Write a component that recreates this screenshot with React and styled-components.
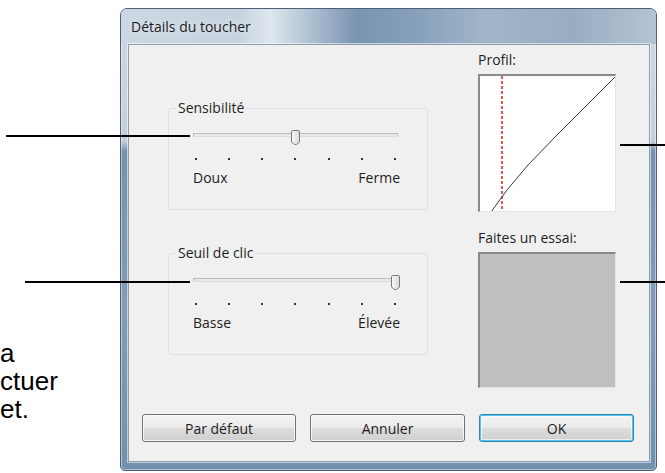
import styled, { createGlobalStyle } from 'styled-components';

const GlobalStyle = createGlobalStyle`
  html, body {
    margin: 0;
    padding: 0;
    background: #ffffff;
  }
`;

const Page = styled.div`
  position: relative;
  width: 665px;
  height: 473px;
  overflow: hidden;
  display: flex;
  align-items: flex-start;
  background: #ffffff;
`;

const BodyText = styled.div`
  width: 120px;
  flex-shrink: 0;
  padding-top: 339px;
  font-family: 'Liberation Sans', Arial, sans-serif;
  font-size: 26px;
  line-height: 28px;
  color: #000;
  white-space: nowrap;
`;

const Callout = styled.div`
  position: absolute;
  height: 2px;
  background: #000;
  top: ${(p) => p.top}px;
  left: ${(p) => p.left}px;
  width: ${(p) => p.width}px;
  z-index: 5;
`;

const Window = styled.div`
  margin-top: 8px;
  width: 537px;
  height: 463px;
  box-sizing: border-box;
  display: flex;
  flex-direction: column;
  padding: 0 6px 8px 7px;
  border: 1px solid #4d6075;
  border-radius: 7px 7px 5px 5px;
  background: linear-gradient(
    to bottom,
    #cdd8e3 0px,
    #c3cfdb 132px,
    #7592af 142px,
    #809cb8 300px,
    #7191af 100%
  );
  box-shadow: inset 0 0 0 1px rgba(255, 255, 255, 0.45);
  font-family: 'Open Sans', 'Noto Sans', sans-serif;
  font-size: 14px;
  color: #1e1e1e;
`;

const TitleBar = styled.div`
  height: 35px;
  margin: 0 -6px 0 -7px;
  padding-left: 10px;
  display: flex;
  align-items: center;
  padding-bottom: 1px;
  box-sizing: border-box;
  border-radius: 6px 6px 0 0;
  background: linear-gradient(
    90deg,
    #cbd7e2 0%,
    #c6d3df 22%,
    #dfe7ee 28%,
    #abbdd0 36%,
    #7a95b2 44%,
    #86a0ba 55%,
    #a2b5c8 68%,
    #98adc2 84%,
    #b3c3d2 100%
  );
  color: #1a1a1a;
  text-shadow: 0 0 6px rgba(255, 255, 255, 0.9);
`;

const Client = styled.div`
  flex: 1;
  display: flex;
  flex-direction: column;
  background: #f0f0f0;
  border: 1px solid #8d9eb1;
  box-shadow: 0 0 0 1px rgba(255, 255, 255, 0.55);
`;

const Main = styled.div`
  display: flex;
  padding-left: 39px;
  gap: 50px;
`;

const LeftColumn = styled.div`
  width: 260px;
  padding-top: 55px;
  display: flex;
  flex-direction: column;
  gap: 35px;
`;

const Group = styled.fieldset`
  margin: 0;
  padding: 0 29px 23px 24px;
  border: 1px solid #d9e1e7;
  border-radius: 3px;
  min-width: 0;
`;

const Legend = styled.legend`
  margin-left: -17px;
  padding: 0 2px;
  line-height: 16px;
  color: #1e1e1e;
`;

const SliderWrap = styled.div`
  position: relative;
  height: 14px;
  margin-top: 14px;
`;

const Track = styled.div`
  position: absolute;
  left: 0;
  right: 0;
  top: 3px;
  height: 2px;
  background: #e7eaea;
  border: 1px solid #b9bdbf;
  border-bottom-color: #dadddf;
  border-radius: 1px;
`;

const Thumb = styled.svg`
  position: absolute;
  top: 0;
  margin-left: -4.5px;
`;

const Ticks = styled.div`
  display: flex;
  justify-content: space-between;
  padding: 0 2px;
  margin-top: 14px;
`;

const Tick = styled.span`
  width: 2px;
  height: 2px;
  background: #333;
`;

const Scale = styled.div`
  display: flex;
  justify-content: space-between;
  margin: 10px -2px 0 0;
  line-height: 16px;
`;

const RightColumn = styled.div`
  width: 138px;
  padding-top: 7px;
  display: flex;
  flex-direction: column;
`;

const Caption = styled.div`
  line-height: 16px;
  margin-bottom: 6px;
`;

const Well = styled.div`
  box-sizing: border-box;
  width: 138px;
  height: ${(p) => p.h}px;
  background: ${(p) => p.bg};
  border-top: 2px solid #8a8a8a;
  border-left: 2px solid #8a8a8a;
  border-right: 1px solid #e4e4e4;
  border-bottom: 1px solid #e4e4e4;
  margin-bottom: ${(p) => p.mb || 0}px;
`;

const ButtonRow = styled.div`
  margin-top: auto;
  padding: 0 0 19px 13px;
  display: flex;
  gap: 14px;
`;

const Button = styled.button`
  width: ${(p) => p.w}px;
  height: 28px;
  padding: 0;
  font-family: inherit;
  font-size: 14px;
  color: #1e1e1e;
  border-radius: 3px;
  border: 1px solid ${(p) => (p.primary ? '#3c7fb1' : '#707070')};
  background: linear-gradient(
    to bottom,
    #f2f2f2 0%,
    #ebebeb 50%,
    #dddddd 51%,
    #cfcfcf 100%
  );
  box-shadow: ${(p) =>
    p.primary
      ? 'inset 0 0 0 1px #48c8f4, inset 0 0 0 2px rgba(255,255,255,0.6)'
      : 'inset 0 0 0 1px rgba(255,255,255,0.8)'};
`;

function Slider({ id, label, value, low, high }) {
  const frac = value / 6;
  return (
    <Group>
      <Legend>{label}</Legend>
      <SliderWrap>
        <Track />
        <Thumb
          width="9"
          height="15"
          viewBox="0 0 9 15"
          style={{ left: `calc(3px + (100% - 6px) * ${frac})` }}
        >
          <defs>
            <linearGradient id={`thumb-${id}`} x1="0" y1="0" x2="1" y2="0">
              <stop offset="0" stopColor="#fbfbfb" />
              <stop offset="1" stopColor="#d9d9d9" />
            </linearGradient>
          </defs>
          <path
            d="M1.8 0.5 H7.2 Q8.5 0.5 8.5 1.8 V11 Q8.5 12 7.5 13 L5.3 14.5 H3.7 L1.5 13 Q0.5 12 0.5 11 V1.8 Q0.5 0.5 1.8 0.5 Z"
            fill={`url(#thumb-${id})`}
            stroke="#7a7a7a"
            strokeWidth="1"
          />
        </Thumb>
      </SliderWrap>
      <Ticks>
        {Array.from({ length: 7 }).map((_, i) => (
          <Tick key={i} />
        ))}
      </Ticks>
      <Scale>
        <span>{low}</span>
        <span>{high}</span>
      </Scale>
    </Group>
  );
}

export default function App() {
  return (
    <Page>
      <GlobalStyle />
      <BodyText>
        <div>a</div>
        <div>ctuer</div>
        <div>et.</div>
      </BodyText>

      <Window>
        <TitleBar>Détails du toucher</TitleBar>
        <Client>
          <Main>
            <LeftColumn>
              <Slider id="sens" label="Sensibilité" value={3} low="Doux" high="Ferme" />
              <Slider id="seuil" label="Seuil de clic" value={6} low="Basse" high="Élevée" />
            </LeftColumn>
            <RightColumn>
              <Caption>Profil:</Caption>
              <Well h={138} bg="#ffffff" mb={18}>
                <svg width="135" height="135" viewBox="0 0 135 135">
                  <line
                    x1="22"
                    y1="0"
                    x2="22"
                    y2="135"
                    stroke="#e02020"
                    strokeWidth="1.5"
                    strokeDasharray="3 2"
                  />
                  <path
                    d="M11 136 L27 114 L48 89 L77 59 L135 1"
                    fill="none"
                    stroke="#3a3a3a"
                    strokeWidth="1"
                  />
                </svg>
              </Well>
              <Caption>Faites un essai:</Caption>
              <Well h={136} bg="#c0c0c0" />
            </RightColumn>
          </Main>
          <ButtonRow>
            <Button w={154}>Par défaut</Button>
            <Button w={155}>Annuler</Button>
            <Button w={155} primary>
              OK
            </Button>
          </ButtonRow>
        </Client>
      </Window>

      <Callout top={135} left={6} width={184} />
      <Callout top={281} left={25} width={165} />
      <Callout top={144} left={620} width={45} />
      <Callout top={281} left={620} width={45} />
    </Page>
  );
}
